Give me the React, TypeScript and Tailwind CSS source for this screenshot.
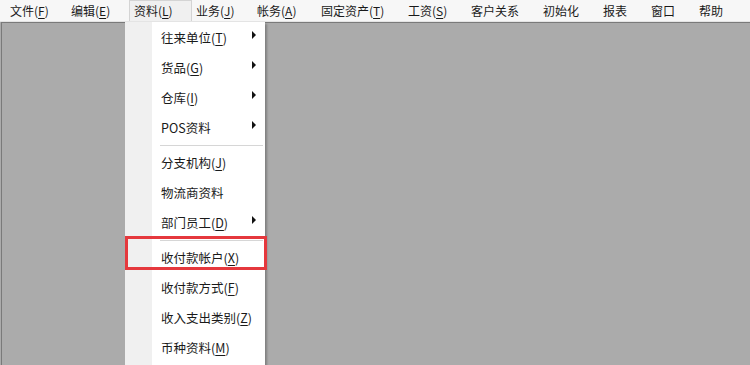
import React from "react";

type Bar = { label: string; key?: string; w: number; active?: boolean };

const bar: Bar[] = [
  { label: "文件", key: "F", w: 61 },
  { label: "编辑", key: "E", w: 62 },
  { label: "资料", key: "L", w: 63, active: true },
  { label: "业务", key: "J", w: 61 },
  { label: "帐务", key: "A", w: 64 },
  { label: "固定资产", key: "T", w: 87 },
  { label: "工资", key: "S", w: 63 },
  { label: "客户关系", w: 72 },
  { label: "初始化", w: 60 },
  { label: "报表", w: 48 },
  { label: "窗口", w: 48 },
  { label: "帮助", w: 40 },
];

type Item = { label: string; key?: string; sub?: boolean; sep?: boolean };

const items: Item[] = [
  { label: "往来单位", key: "T", sub: true },
  { label: "货品", key: "G", sub: true },
  { label: "仓库", key: "I", sub: true },
  { label: "POS资料", sub: true },
  { label: "", sep: true },
  { label: "分支机构", key: "J" },
  { label: "物流商资料" },
  { label: "部门员工", key: "D", sub: true },
  { label: "", sep: true },
  { label: "收付款帐户", key: "X" },
  { label: "收付款方式", key: "F" },
  { label: "收入支出类别", key: "Z" },
  { label: "币种资料", key: "M" },
  { label: "", sep: true },
];

function Label({ label, k }: { label: string; k?: string }) {
  return (
    <span>
      {label}
      {k && (
        <>
          (<span className="underline underline-offset-2">{k}</span>)
        </>
      )}
    </span>
  );
}

export default function App() {
  return (
    <div
      className="relative w-[750px] h-[365px] overflow-hidden flex flex-col bg-[#ababab] text-[#1a1a1a]"
      style={{ fontFamily: '"Noto Sans CJK SC", "Microsoft YaHei", sans-serif' }}
    >
      {/* menu bar */}
      <div className="h-[22px] flex items-stretch pl-[6px] bg-[#f7f7f7] border-b border-[#e4e4e4] text-[12px]">
        {bar.map((b) => (
          <div
            key={b.label}
            style={{ width: b.w }}
            className={`flex items-center pl-[4px] leading-none ${
              b.active ? "bg-[#f0f0f0] border-x border-t border-[#d4d4d4] relative z-20" : ""
            }`}
          >
            <Label label={b.label} k={b.key} />
          </div>
        ))}
      </div>
      {/* workspace */}
      <div className="flex-1 border-t border-l border-[#7a7a7a] ml-[1px]" />

      {/* dropdown */}
      <div className="absolute left-[125px] top-[22px] w-[140px] bg-white flex shadow-[2px_2px_2px_rgba(0,0,0,0.25)] text-[12.5px] z-10">
        <div className="w-[27px] bg-[#f0f0f0] shrink-0" />
        <div className="flex-1 pt-[1px]">
          {items.map((it, i) =>
            it.sep ? (
              <div key={i} className="h-[5px] flex items-center pl-[8px] pr-[2px]">
                <div className="h-px w-full bg-[#d6d6d6]" />
              </div>
            ) : (
              <div key={i} className="h-[30px] flex items-center pl-[9px] pr-[8px] leading-none">
                <Label label={it.label} k={it.key} />
                <span className="flex-1" />
                {it.sub && (
                  <svg width="5" height="8" viewBox="0 0 5 8" className="mb-[6px]">
                    <path d="M0 0 L4 4 L0 8 Z" fill="#111" />
                  </svg>
                )}
              </div>
            )
          )}
        </div>
      </div>

      {/* highlight frame */}
      <div className="absolute left-[125px] top-[236px] w-[142px] h-[34px] border-[3px] border-[#e5383d] z-30" />
    </div>
  );
}
